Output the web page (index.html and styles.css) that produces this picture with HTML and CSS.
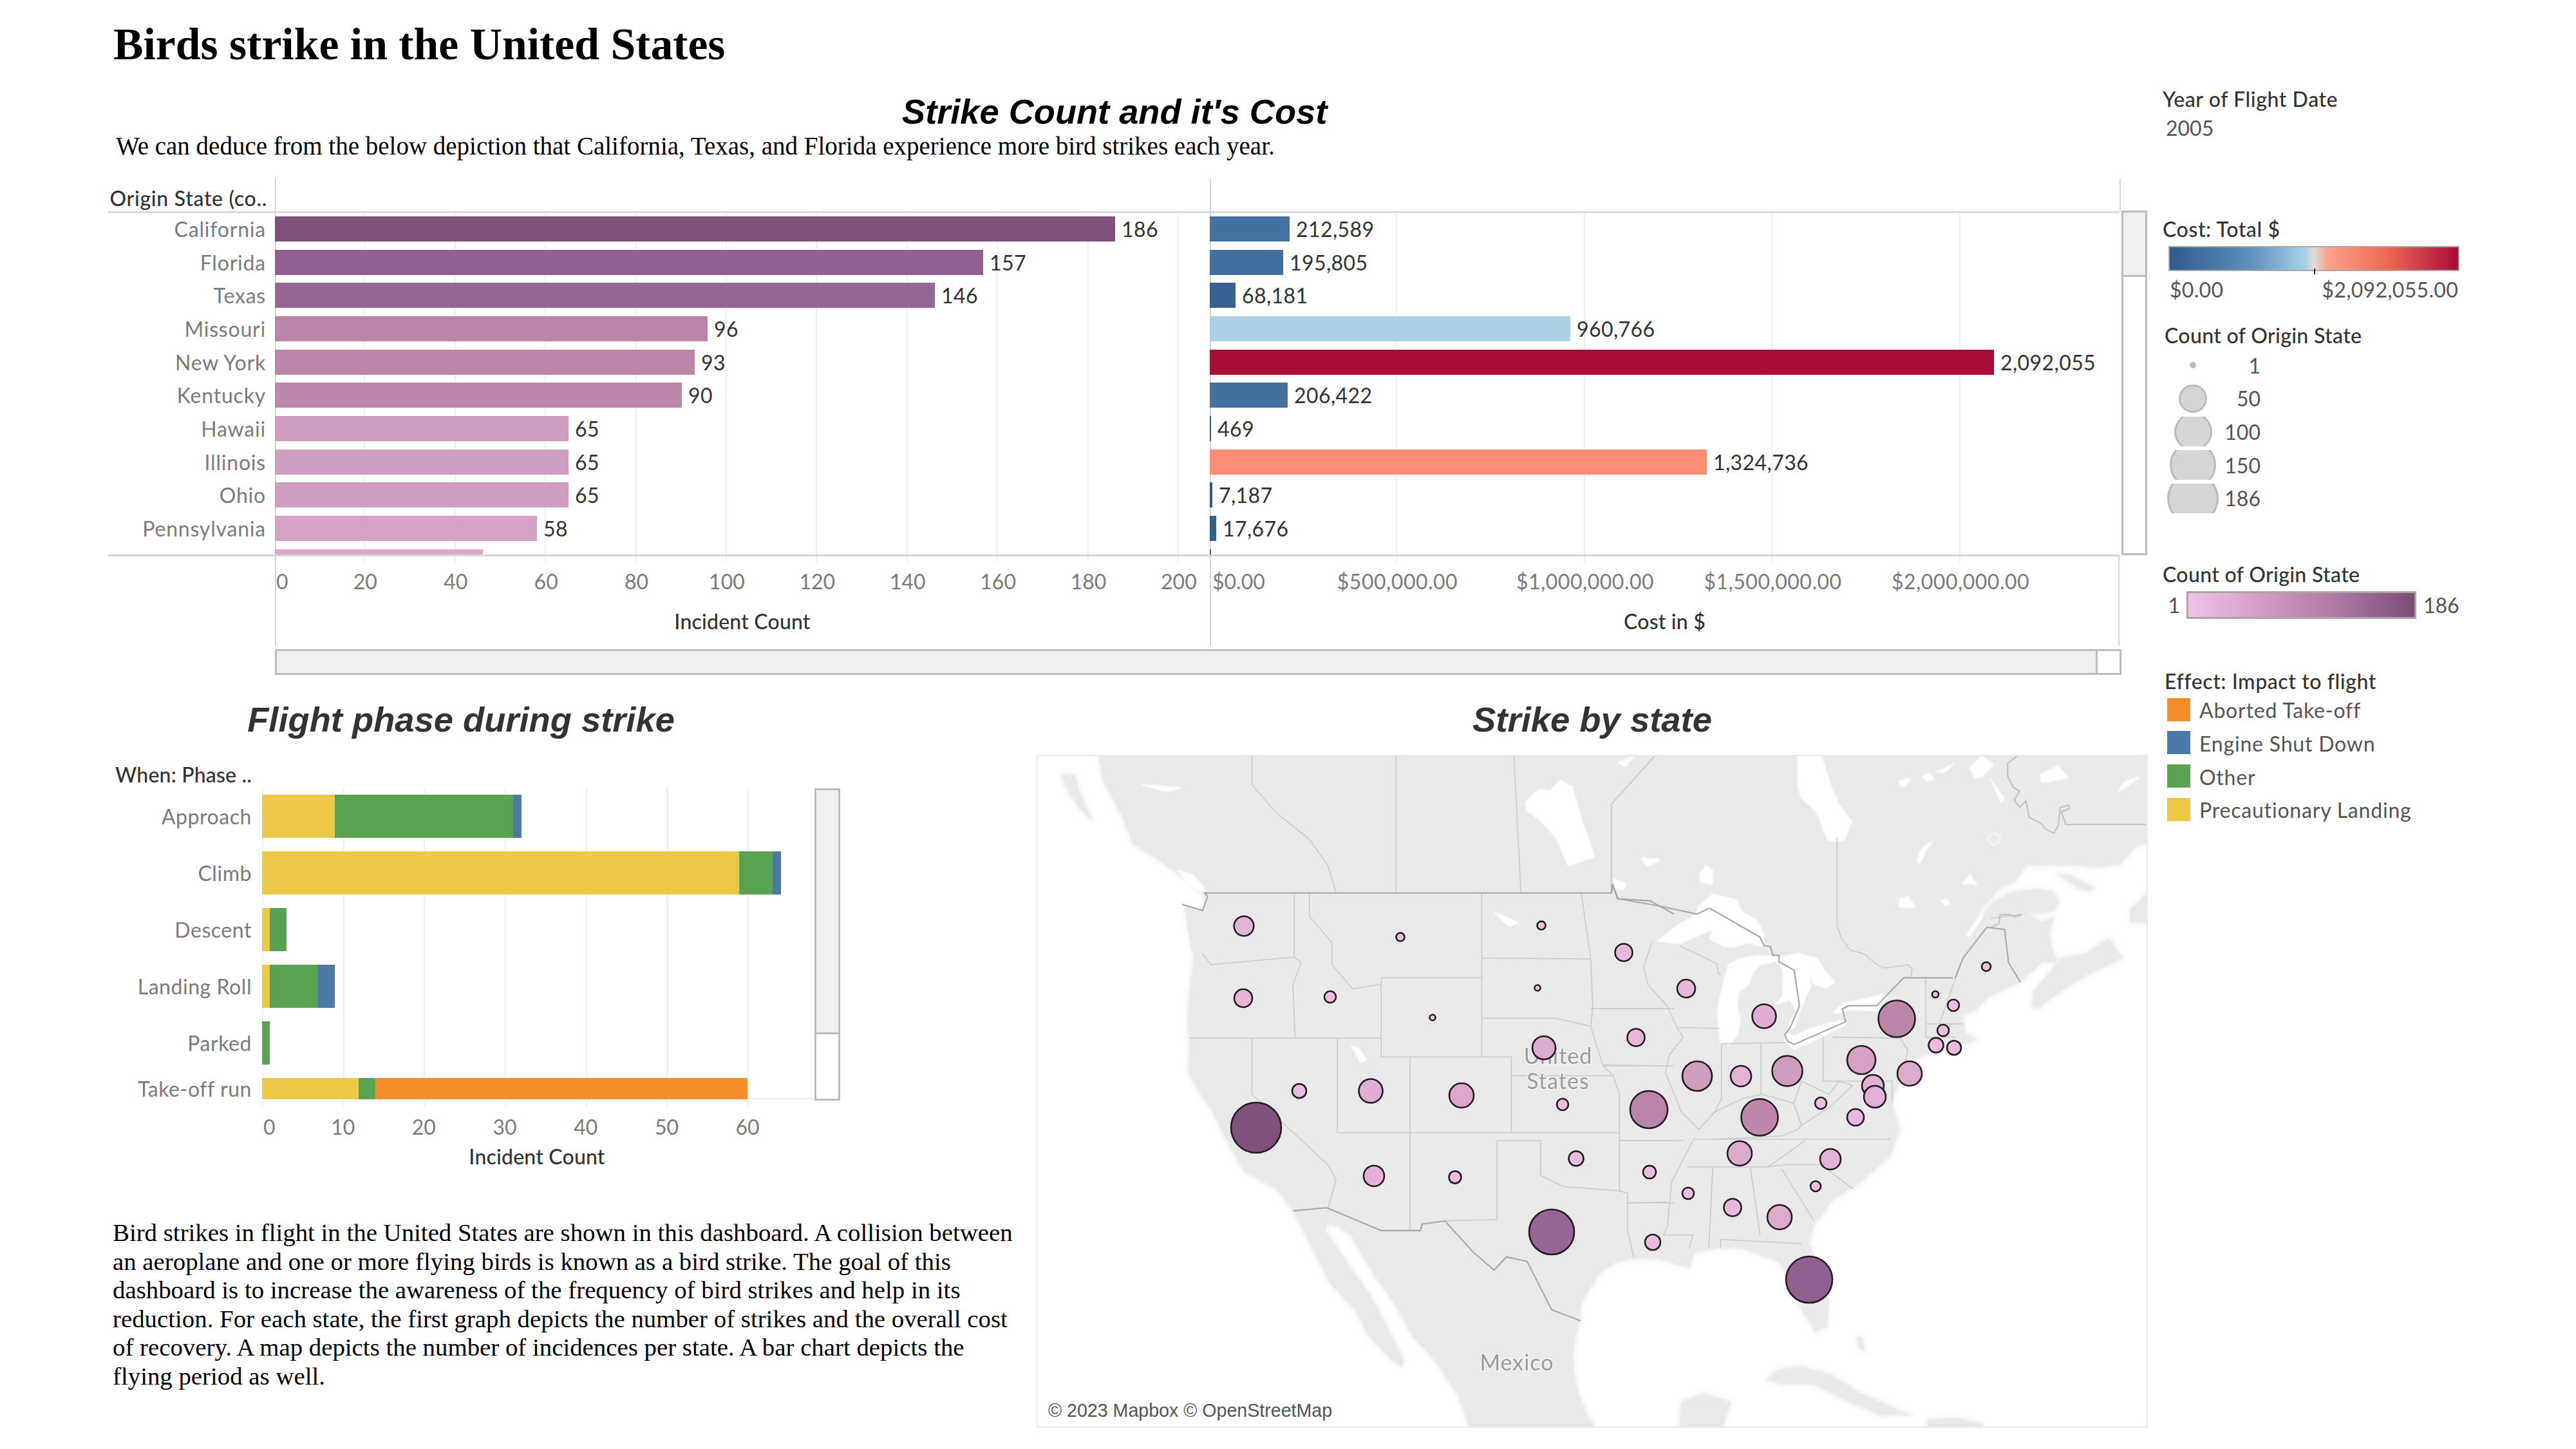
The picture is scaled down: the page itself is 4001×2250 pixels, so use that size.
FILE: index.html
```html
<!DOCTYPE html>
<html lang="en">
<head>
<meta charset="utf-8">
<title>Birds strike in the United States</title>
<link rel="stylesheet" href="styles.css">
</head>
<body>
<div class="dash">
  <main class="main">
    <h1 class="title">Birds strike in the United States</h1>
    <h2 class="head-top">Strike Count and it's Cost</h2>
    <p class="deduce">We can deduce from the below depiction that California, Texas, and Florida experience more bird strikes each year.</p>

    <section class="top">
      <div class="hdr">Origin State (co..</div>
      <div class="hdr-blank ruled"></div>
      <div class="hdr-blank ruled"></div>
      <div class="hdr-end"></div>

      <div class="plot labels">
        <div class="row">California</div>
        <div class="row">Florida</div>
        <div class="row">Texas</div>
        <div class="row">Missouri</div>
        <div class="row">New York</div>
        <div class="row">Kentucky</div>
        <div class="row">Hawaii</div>
        <div class="row">Illinois</div>
        <div class="row">Ohio</div>
        <div class="row">Pennsylvania</div>
        <div class="row">Colorado</div>
      </div>
      <div class="plot ruled grid1">
        <div class="row"><i class="bar" style="width:1305px;background:#7f5079"></i><span class="val">186</span></div>
        <div class="row"><i class="bar" style="width:1100px;background:#906090"></i><span class="val">157</span></div>
        <div class="row"><i class="bar" style="width:1025px;background:#966794"></i><span class="val">146</span></div>
        <div class="row"><i class="bar" style="width:672px;background:#ba84a7"></i><span class="val">96</span></div>
        <div class="row"><i class="bar" style="width:652px;background:#bb85a8"></i><span class="val">93</span></div>
        <div class="row"><i class="bar" style="width:632px;background:#bd88aa"></i><span class="val">90</span></div>
        <div class="row"><i class="bar" style="width:456px;background:#cf9dbe"></i><span class="val">65</span></div>
        <div class="row"><i class="bar" style="width:456px;background:#cf9dbe"></i><span class="val">65</span></div>
        <div class="row"><i class="bar" style="width:456px;background:#cf9dbe"></i><span class="val">65</span></div>
        <div class="row"><i class="bar" style="width:407px;background:#d5a2c3"></i><span class="val">58</span></div>
        <div class="row"><i class="bar" style="width:323px;background:#dba8c9"></i></div>
      </div>
      <div class="plot ruled grid2">
        <div class="row"><i class="bar" style="width:124px;background:#44729f"></i><span class="val">212,589</span></div>
        <div class="row"><i class="bar" style="width:114px;background:#42709e"></i><span class="val">195,805</span></div>
        <div class="row"><i class="bar" style="width:40px;background:#366191"></i><span class="val">68,181</span></div>
        <div class="row"><i class="bar" style="width:560px;background:#aed0e4"></i><span class="val">960,766</span></div>
        <div class="row"><i class="bar" style="width:1218px;background:#a90c38"></i><span class="val">2,092,055</span></div>
        <div class="row"><i class="bar" style="width:121px;background:#44729f"></i><span class="val">206,422</span></div>
        <div class="row"><i class="bar" style="width:2px;background:#2f5b8c"></i><span class="val">469</span></div>
        <div class="row"><i class="bar" style="width:772px;background:#fc8d76"></i><span class="val">1,324,736</span></div>
        <div class="row"><i class="bar" style="width:4px;background:#2f5b8c"></i><span class="val">7,187</span></div>
        <div class="row"><i class="bar" style="width:10px;background:#30608f"></i><span class="val">17,676</span></div>
        <div class="row"><i class="bar" style="width:2px;background:#2f5b8c"></i></div>
      </div>
      <div class="vscroll"><div class="thumb-top"></div></div>

      <div class="axis-blank"></div>
      <div class="axis ruled ext1">
        <div class="ticks">
          <span class="tick0">0</span><span class="tick1">20</span><span class="tick1">40</span><span class="tick1">60</span><span class="tick1">80</span><span class="tick1">100</span><span class="tick1">120</span><span class="tick1">140</span><span class="tick1">160</span><span class="tick1">180</span><span class="tick1">200</span>
        </div>
        <div class="axis-title">Incident Count</div>
      </div>
      <div class="axis ruled-both ext2">
        <div class="ticks">
          <span class="tick0b">$0.00</span><span class="tick2">$500,000.00</span><span class="tick2">$1,000,000.00</span><span class="tick2">$1,500,000.00</span><span class="tick2">$2,000,000.00</span>
        </div>
        <div class="axis-title">Cost in $</div>
      </div>
      <div class="axis-blank"></div>
    </section>
    <div class="hscroll"><div class="hthumb"></div></div>

    <section class="lower">
      <div class="lower-left">
        <h2 class="head-phase">Flight phase during strike</h2>
        <div class="phase">
          <div class="hdr-phase">When: Phase ..</div>
          <div></div>
          <div></div>
          <div class="phase-labels">
            <div class="prow">Approach</div>
            <div class="prow">Climb</div>
            <div class="prow">Descent</div>
            <div class="prow">Landing Roll</div>
            <div class="prow">Parked</div>
            <div class="prow">Take-off run</div>
          </div>
          <div class="phase-plot">
            <div class="prow"><i class="seg yellow" style="width:113px"></i><i class="seg green" style="width:277px"></i><i class="seg blue" style="width:13px"></i></div>
            <div class="prow"><i class="seg yellow" style="width:741px"></i><i class="seg green" style="width:52px"></i><i class="seg blue" style="width:13px"></i></div>
            <div class="prow"><i class="seg yellow" style="width:12px"></i><i class="seg green" style="width:26px"></i></div>
            <div class="prow"><i class="seg yellow" style="width:12px"></i><i class="seg green" style="width:75px"></i><i class="seg blue" style="width:26px"></i></div>
            <div class="prow"><i class="seg green" style="width:12px"></i></div>
            <div class="prow"><i class="seg yellow" style="width:150px"></i><i class="seg green" style="width:26px"></i><i class="seg orange" style="width:578px"></i></div>
          </div>
          <div class="vscroll phase-scroll"><div class="thumb-phase"></div></div>
          <div></div>
          <div class="phase-axis">
            <div class="ticks">
              <span class="ptick0">0</span><span class="ptick">10</span><span class="ptick">20</span><span class="ptick">30</span><span class="ptick">40</span><span class="ptick">50</span><span class="ptick">60</span>
            </div>
            <div class="axis-title phase-title">Incident Count</div>
          </div>
          <div></div>
        </div>
        <p class="story">Bird strikes in flight in the United States are shown in this dashboard. A collision between<br>an aeroplane and one or more flying birds is known as a bird strike. The goal of this<br>dashboard is to increase the awareness of the frequency of bird strikes and help in its<br>reduction. For each state, the first graph depicts the number of strikes and the overall cost<br>of recovery. A map depicts the number of incidences per state. A bar chart depicts the<br>flying period as well.</p>
      </div>

      <div class="lower-right">
        <h2 class="head-map">Strike by state</h2>
        <div class="map">
          <svg class="map-svg" viewBox="1610 1172 1726 1045" width="1726" height="1045" xmlns="http://www.w3.org/2000/svg">
            <defs>
              <g id="land">
                <g transform="translate(1600 1160) scale(0.6378 0.6826)">
                  <polygon points="165,18 180,80 225,160 250,220 310,255 355,285 420,335 428,365 400,370 375,358 385,420 398,480 388,560 383,620 388,680 385,740 415,790 445,830 472,885 520,965 600,1005 640,1055 680,1130 730,1220 790,1280 825,1340 880,1395 905,1410 910,1390 870,1320 830,1250 770,1170 720,1100 725,1085 750,1090 780,1110 830,1190 890,1270 930,1340 990,1400 1040,1470 1070,1548 1375,1548 1335,1480 1322,1400 1330,1320 1345,1260 1385,1200 1420,1175 1460,1165 1568,1165 1568,18"/>
                  <polygon points="78,62 110,65 120,100 150,165 120,140 85,90"/>
                </g>
                <g transform="translate(2400 1160) scale(0.6124 0.6826)">
                  <polygon points="0,18 1530,18 1530,218 1497,227 1458,267 1399,274 1323,267 1220,270 1192,306 1154,322 1110,365 1065,428 1066,432 1089,403 1132,355 1181,330 1252,322 1290,330 1303,350 1290,374 1225,379 1257,398 1290,388 1279,423 1285,457 1300,490 1260,490 1205,535 1130,565 1090,600 1060,610 1065,650 1095,665 1050,680 950,705 905,740 880,810 900,870 875,930 800,990 730,1030 680,1090 670,1130 700,1200 720,1260 715,1320 685,1330 650,1280 625,1210 590,1170 500,1140 440,1140 380,1150 365,1185 290,1165 215,1160 180,1170 110,1210 85,1250 90,1300 70,1360 75,1450 120,1548 0,1548"/>
                  <polygon points="1235,590 1238,555 1310,480 1370,470 1430,435 1465,480 1380,515 1300,560 1250,595"/>
                  <polygon points="1298,289 1334,292 1393,321 1377,328 1351,321"/>
                  <polygon points="1483,398 1483,369 1530,330 1530,398"/>
                  <polygon points="340,1548 345,1490 400,1470 470,1490 450,1548"/>
                  <polygon points="560,1440 590,1415 650,1410 720,1425 800,1470 900,1510 930,1520 850,1520 770,1490 680,1450 600,1450"/>
                  <polygon points="970,1530 1040,1525 1110,1540 1110,1548 970,1548"/>
                  <polygon points="790,1340 805,1345 810,1375 795,1365"/>
                </g>
              </g>
            </defs>
            <g class="land-halo"><use href="#land"/></g>
            <g class="land-fill"><use href="#land"/></g>

            <g class="water">
              <g transform="translate(1600 1160) scale(0.6378 0.6826)">
                <polygon points="360,280 395,290 425,320 420,330 380,310"/>
                <polygon points="1205,125 1240,95 1265,100 1290,75 1320,90 1345,170 1375,250 1310,270 1280,205 1240,165 1210,145"/>
                <polygon points="1430,35 1470,20 1450,45"/>
                <polygon points="1420,300 1450,310 1445,325 1425,320"/>
                <polygon points="782,680 800,685 820,712 805,718"/>
                <polygon points="1130,375 1190,400 1165,408"/>
                <polygon points="270,85 370,92 330,102"/>
                <polygon points="1490,250 1530,260 1500,270"/>
              </g>
              <g transform="translate(2400 1160) scale(0.6124 0.6826)">
                <polygon points="640,18 700,18 725,90 745,130 778,170 760,210 740,215 715,210 690,150 650,115 640,90"/>
                <polygon points="240,255 290,255 265,270"/>
              </g>
              <g transform="translate(2560 1340) scale(0.3333)">
                <polygon points="40,365 120,300 220,240 235,200 300,145 410,170 440,230 510,270 540,330 535,390 470,372 400,395 350,388 285,355 300,310 220,345 150,375 115,375"/>
                <polygon points="335,840 385,845 420,790 430,730 415,660 425,600 470,565 490,510 525,475 600,460 600,432 500,432 430,445 375,470 350,550 320,690 330,780"/>
                <polygon points="600,440 700,420 790,445 815,490 870,555 830,585 770,565 745,510 760,570 730,640 700,710 680,770 650,775 665,730 690,690 660,640 590,660 625,620 630,560 625,500"/>
                <polygon points="630,830 680,868 760,835 830,800 925,750 905,730 760,768 680,805 640,790"/>
                <polygon points="860,700 905,655 1040,625 1090,610 1120,625 1080,660 1070,690 930,685 910,700"/>
                <polygon points="240,50 270,10 300,30 300,100 240,90"/>
                <polygon points="1165,200 1210,160 1245,205 1190,210"/>
                <polygon points="1370,180 1400,185 1385,200"/>
                <polygon points="1480,340 1560,230 1560,250 1500,340"/>
              </g>
              <g transform="translate(2950 1172) scale(0.3333)">
                <polygon points="0,120 60,105 30,145 0,145"/>
                <polygon points="105,100 140,85 165,115 125,125"/>
                <polygon points="170,80 260,40 210,85"/>
                <polygon points="325,60 385,5 440,45 390,100 350,110"/>
                <polygon points="420,105 490,200 475,225 440,150"/>
                <polygon points="655,90 740,50 790,110 700,125 660,130"/>
                <polygon points="1015,175 1050,125 1125,100 1060,150"/>
                <polygon points="80,500 100,440 160,395 130,440 95,510"/>
                <polygon points="290,605 330,555 365,610 330,600"/>
                <polygon points="195,680 220,670 235,690 215,705"/>
                <polygon points="0,670 40,660 75,710 30,715 0,700"/>
                <circle cx="442" cy="392" r="26" class="ring"/>
              </g>
            </g>

            <g class="lines" transform="translate(1600 1160) scale(0.6378 0.6826)">
              <polyline points="540,18 540,85 600,150 680,210 725,270 745,330"/>
              <line x1="891" y1="18" x2="891" y2="330"/>
              <polyline points="1178,18 1195,330"/>
              <polyline points="1523,18 1415,130 1415,330"/>
              <line x1="643" y1="332" x2="643" y2="478"/>
              <polyline points="420,470 440,495 560,485 643,478 660,490 640,540 645,660"/>
              <line x1="388" y1="662" x2="855" y2="662"/>
              <polyline points="540,662 540,790 725,950 745,985 725,1050"/>
              <polyline points="680,332 680,385 735,445 735,495 785,550 855,540"/>
              <polyline points="855,525 1100,525"/>
              <polyline points="855,525 855,705 1172,705 1172,877"/>
              <line x1="1100" y1="332" x2="1100" y2="705"/>
              <line x1="1100" y1="480" x2="1365" y2="482"/>
              <polyline points="1100,617 1280,617 1365,635 1395,725 1420,748"/>
              <polyline points="1342,332 1365,480 1370,595 1365,635"/>
              <line x1="748" y1="662" x2="748" y2="877"/>
              <line x1="748" y1="877" x2="1435" y2="877"/>
              <line x1="925" y1="705" x2="925" y2="1100"/>
              <polyline points="1137,895 1137,1075 1010,1078"/>
              <polyline points="1137,895 1243,895 1243,975 1300,1000 1440,1010"/>
              <polyline points="1172,748 1420,748 1435,790 1435,1010 1455,1015 1455,1100 1470,1160"/>
              <line x1="1435" y1="895" x2="1568" y2="895"/>
              <line x1="1455" y1="1037" x2="1568" y2="1037"/>
              <line x1="1365" y1="595" x2="1568" y2="595"/>
              <line x1="1395" y1="725" x2="1568" y2="725"/>
            </g>
            <g class="lines" transform="translate(2400 1160) scale(0.6124 0.6826)">
              <line x1="120" y1="595" x2="310" y2="595"/>
              <polyline points="270,445 250,500 260,540 310,590 335,640 350,660 315,700 305,740 345,830 390,870"/>
              <line x1="335" y1="638" x2="440" y2="640"/>
              <line x1="145" y1="723" x2="305" y2="725"/>
              <polyline points="447,675 447,800 430,830 390,870"/>
              <line x1="547" y1="672" x2="547" y2="790"/>
              <line x1="447" y1="675" x2="615" y2="672"/>
              <line x1="705" y1="660" x2="705" y2="760"/>
              <line x1="730" y1="660" x2="900" y2="662"/>
              <line x1="705" y1="760" x2="880" y2="760"/>
              <polyline points="430,830 500,800 550,790 630,810 650,860 640,870 600,885 430,892"/>
              <polyline points="360,955 565,955 660,895"/>
              <line x1="375" y1="892" x2="875" y2="892"/>
              <polyline points="630,810 650,860 720,820 780,770 745,760 720,790 650,760 630,810"/>
              <polyline points="565,955 610,950 700,950 780,1005"/>
              <line x1="600" y1="960" x2="680" y2="1075"/>
              <line x1="520" y1="955" x2="545" y2="1110"/>
              <line x1="425" y1="955" x2="415" y2="1140"/>
              <polyline points="375,895 320,990 310,1090 300,1110 375,1110 365,1140"/>
              <line x1="190" y1="895" x2="350" y2="895"/>
              <line x1="208" y1="1037" x2="310" y2="1035"/>
              <polyline points="445,1140 445,1120 650,1130"/>
              <line x1="965" y1="525" x2="965" y2="660"/>
              <line x1="1000" y1="630" x2="1045" y2="515"/>
              <line x1="965" y1="630" x2="1060" y2="630"/>
              <line x1="965" y1="660" x2="1040" y2="660"/>
              <polyline points="900,662 920,690 900,760"/>
              <line x1="880" y1="760" x2="880" y2="810"/>
              <line x1="1025" y1="630" x2="1025" y2="660"/>
              <polyline points="168,130 280,18"/>
              <line x1="168" y1="130" x2="168" y2="330"/>
              <line x1="740" y1="205" x2="740" y2="405"/>
              <polyline points="1130,390 1210,380"/>
            </g>
            <g class="lines" transform="translate(2560 1340) scale(0.3333)">
              <polyline points="145,385 240,430 320,470 325,510 338,525"/>
              <polyline points="880,290 900,350 940,405 1010,425 1060,470 1100,490 1210,475 1230,495 1225,530"/>
            </g>
            <g class="lines fine" transform="translate(2950 1172) scale(0.3333)">
              <polyline points="550,5 505,40 505,100 530,150 560,170 535,210 560,245 590,215 605,290 660,320 680,345 720,365 740,330 750,245 790,235 795,250 755,265 775,325 1150,325"/>
              <polyline points="425,805 465,785 470,745 515,745 535,755 570,745"/>
            </g>
            <g class="border" transform="translate(1600 1160) scale(0.6378 0.6826)">
              <polyline points="370,358 420,372 432,340 425,332 1415,332 1420,315 1430,345 1510,350 1568,380"/>
              <polyline points="640,1055 722,1048 855,1100 950,1100 955,1085 1010,1078 1080,1150 1130,1190 1160,1160 1210,1170 1270,1280 1340,1305"/>
            </g>
            <g class="border" transform="translate(2400 1160) scale(0.6124 0.6826)">
              <polyline points="168,332 170,315 185,345 280,360 385,380 415,367"/>
              <polyline points="1040,525 1060,480 1120,410 1165,415 1175,490 1205,535"/>
            </g>
            <g class="border" transform="translate(2560 1340) scale(0.3333)">
              <polyline points="285,210 520,345 540,385 570,390 580,430 610,430 610,460 680,500 705,665 660,770 635,800 650,830 680,845 920,740 905,680 935,665 1065,665 1190,535 1420,535"/>
            </g>

            <text class="map-label" x="2420" y="1652" text-anchor="middle">United</text>
            <text class="map-label" x="2420" y="1691" text-anchor="middle">States</text>
            <text class="map-label" x="2356" y="2128" text-anchor="middle">Mexico</text>

            <g class="marks">
              <circle cx="2810" cy="1987" r="36" fill="#906090"/>
              <circle cx="2410" cy="1913" r="35" fill="#966794"/>
              <circle cx="1951" cy="1751" r="39" fill="#7f5079"/>
              <circle cx="2561" cy="1723" r="29" fill="#ba84a7"/>
              <circle cx="2733" cy="1735" r="28.5" fill="#bd88aa"/>
              <circle cx="2946" cy="1582" r="28.5" fill="#bb85a8"/>
              <circle cx="2636" cy="1671" r="23" fill="#cf9dbe"/>
              <circle cx="2776" cy="1663" r="23.5" fill="#cf9dbe"/>
              <circle cx="2891" cy="1646" r="22" fill="#d5a2c3"/>
              <circle cx="2398" cy="1627" r="18" fill="#dcaacb"/>
              <circle cx="2270" cy="1701" r="19" fill="#dba8c9"/>
              <circle cx="2129" cy="1694" r="18.5" fill="#dfaed0"/>
              <circle cx="2740" cy="1578" r="18.5" fill="#dfaed0"/>
              <circle cx="2702" cy="1791" r="19" fill="#dcaacb"/>
              <circle cx="2966" cy="1667" r="19" fill="#dcaacb"/>
              <circle cx="2764" cy="1890" r="19" fill="#dcaacb"/>
              <circle cx="2909" cy="1686" r="17" fill="#e1b0d3"/>
              <circle cx="2912" cy="1703" r="17" fill="#e1b0d3"/>
              <circle cx="1932" cy="1438" r="15.3" fill="#e3b3d6"/>
              <circle cx="1931" cy="1550" r="14" fill="#e6b5d8"/>
              <circle cx="2134" cy="1826" r="16" fill="#e3b3d6"/>
              <circle cx="2704" cy="1671" r="16" fill="#e3b3d6"/>
              <circle cx="2843" cy="1800" r="16" fill="#e3b3d6"/>
              <circle cx="2619" cy="1535" r="14" fill="#e8b8db"/>
              <circle cx="2522" cy="1479" r="13.5" fill="#e8b8db"/>
              <circle cx="2541" cy="1611" r="13.5" fill="#e8b8db"/>
              <circle cx="2691" cy="1875" r="13.5" fill="#e8b8db"/>
              <circle cx="2882" cy="1735" r="13" fill="#e8b8db"/>
              <circle cx="2567" cy="1929" r="12" fill="#eabbdd"/>
              <circle cx="3007" cy="1623" r="11.5" fill="#eabbdd"/>
              <circle cx="3035" cy="1627" r="11" fill="#eabbdd"/>
              <circle cx="2448" cy="1799" r="11.5" fill="#eabbdd"/>
              <circle cx="2018" cy="1694" r="11" fill="#eabbdd"/>
              <circle cx="2562" cy="1820" r="10" fill="#ecbede"/>
              <circle cx="2260" cy="1828" r="9.5" fill="#ecbede"/>
              <circle cx="2066" cy="1548" r="9" fill="#ecbede"/>
              <circle cx="2427" cy="1715" r="9" fill="#ecbede"/>
              <circle cx="2828" cy="1713" r="9" fill="#ecbede"/>
              <circle cx="3018" cy="1600" r="9" fill="#ecbede"/>
              <circle cx="3034" cy="1561" r="9" fill="#ecbede"/>
              <circle cx="2622" cy="1853" r="9" fill="#ecbede"/>
              <circle cx="2820" cy="1842" r="8" fill="#edc0e0"/>
              <circle cx="3085" cy="1501" r="7" fill="#edc0e0"/>
              <circle cx="2175" cy="1455" r="6.5" fill="#edc0e0"/>
              <circle cx="2394" cy="1437" r="6.5" fill="#edc0e0"/>
              <circle cx="3006" cy="1544" r="5" fill="#efc4e3"/>
              <circle cx="2225" cy="1580" r="4.5" fill="#efc4e3"/>
              <circle cx="2388" cy="1534" r="4.5" fill="#efc4e3"/>
            </g>
          </svg>
          <div class="credit">© 2023 Mapbox © OpenStreetMap</div>
        </div>
      </div>
    </section>
  </main>

  <aside class="side">
    <div class="lg-title">Year of Flight Date</div>
    <div class="lg-year">2005</div>

    <div class="lg-title cost-title">Cost: Total $</div>
    <div class="ramp-cost"><i class="ramp-tick"></i></div>
    <div class="ramp-ends"><span>$0.00</span><span>$2,092,055.00</span></div>

    <div class="lg-title count-title">Count of Origin State</div>
    <div class="sizes">
      <div class="size-row"><div class="size-cell"><i class="dot s1"></i></div><span class="size-num">1</span></div>
      <div class="size-row"><div class="size-cell"><i class="dot s50"></i></div><span class="size-num">50</span></div>
      <div class="size-row"><div class="size-cell"><i class="dot s100"></i></div><span class="size-num">100</span></div>
      <div class="size-row"><div class="size-cell"><i class="dot s150"></i></div><span class="size-num">150</span></div>
      <div class="size-row"><div class="size-cell"><i class="dot s186"></i></div><span class="size-num">186</span></div>
    </div>

    <div class="lg-title count2-title">Count of Origin State</div>
    <div class="purple-row"><span class="purple-min">1</span><div class="ramp-purple"></div><span class="purple-max">186</span></div>

    <div class="lg-title effect-title">Effect: Impact to flight</div>
    <div class="swatches">
      <div class="sw-row"><i class="sw orange"></i><span>Aborted Take-off</span></div>
      <div class="sw-row"><i class="sw blue"></i><span>Engine Shut Down</span></div>
      <div class="sw-row"><i class="sw green"></i><span>Other</span></div>
      <div class="sw-row"><i class="sw yellow"></i><span>Precautionary Landing</span></div>
    </div>
  </aside>
</div>
</body>
</html>
```
FILE: styles.css
```css
* { box-sizing: border-box; }
html, body { margin: 0; padding: 0; background: #fff; }
body { width: 4001px; height: 2250px; overflow: hidden; font-family: "Lato", "Open Sans", sans-serif; font-size: 32px; color: #7b7b7b; }
i { display: block; }

.dash { display: grid; grid-template-columns: 3340px 661px; height: 2250px; }
.main { display: flex; flex-direction: column; }

.title { margin: 0; height: 138px; padding-left: 176px; font: bold 69.7px/138px "Liberation Serif", serif; color: #000; white-space: nowrap; }
.head-top { margin: 0; height: 70px; padding-left: 1401px; font: italic bold 54.2px/70px "Liberation Sans", sans-serif; color: #000; white-space: nowrap; }
.deduce { margin: 0; height: 38px; padding-left: 180px; font: 39px/38px "Liberation Serif", serif; color: #000; white-space: nowrap; }

.top { display: grid; margin: 31px 0 0 168px; grid-template-columns: 259px 1452px 1413px 43px; grid-template-rows: 51px 536px 139px; }
.hdr { padding-right: 12px; font-weight: 500; letter-spacing: .7px; line-height: 62px; color: #333; text-align: right; white-space: nowrap; }
.hdr-end { box-shadow: inset 2px 0 0 #d4d4d4; }
.ruled { box-shadow: inset 2px 0 0 #d4d4d4; }
.ruled-both { box-shadow: inset 2px 0 0 #d4d4d4, inset -2px 0 0 #d4d4d4; }

.plot { height: 536px; padding-top: 5px; overflow: hidden; border-top: 3px solid #dcdcdc; border-bottom: 3px solid #d6d6d6; }
.labels { padding-right: 14px; text-align: right; letter-spacing: .8px; }
.row { display: flex; align-items: center; height: 39px; margin-bottom: 12.67px; white-space: nowrap; }
.labels .row { justify-content: flex-end; }
.grid1 { background-image: repeating-linear-gradient(90deg, transparent 0 138.4px, #f0f0f0 138.4px 140.4px); }
.grid2 { background-image: repeating-linear-gradient(90deg, transparent 0 289.5px, #f0f0f0 289.5px 291.5px); }
.bar { height: 39px; flex: none; }
.val { margin-left: 10px; color: #333; letter-spacing: .4px; }

.vscroll { width: 40px; margin: -1px 0 0 3px; height: 535px; border: 3px solid #bdbdbd; background: #fff; }
.thumb-top { height: 100px; background: #efefef; border-bottom: 3px solid #bdbdbd; }

.axis { display: flex; flex-direction: column; }
.ext1 { background: repeating-linear-gradient(90deg, transparent 0 138.4px, #f0f0f0 138.4px 140.4px) 0 0 / 100% 9px no-repeat; }
.ext2 { background: repeating-linear-gradient(90deg, transparent 0 289.5px, #f0f0f0 289.5px 291.5px) 0 0 / 100% 9px no-repeat; }
.ticks { display: flex; margin-top: 19px; height: 40px; line-height: 40px; white-space: nowrap; }
.tick0 { width: 70.2px; padding-left: 2px; flex: none; }
.tick1 { width: 140.4px; text-align: center; flex: none; }
.tick0b { width: 145.75px; padding-left: 4px; flex: none; }
.tick2 { width: 291.5px; text-align: center; flex: none; letter-spacing: .5px; }
.axis-title { margin-top: 22px; line-height: 40px; font-weight: 500; letter-spacing: .2px; color: #333; text-align: center; }

.hscroll { margin: 5px 0 0 427px; width: 2868px; height: 40px; border: 3px solid #bdbdbd; background: #fff; }
.hthumb { width: 2828px; height: 34px; background: #efefef; border-right: 3px solid #bdbdbd; }

.lower { display: grid; grid-template-columns: 1610px 1726px; }
.lower-left { display: flex; flex-direction: column; }
.head-phase { margin: 37px 0 0; width: 1432px; height: 65px; text-align: center; font: italic bold 54.3px/65px "Liberation Sans", sans-serif; color: #333; white-space: nowrap; }

.phase { display: grid; margin-top: 33px; grid-template-columns: 407px 858px 40px; grid-template-rows: 41px 484px auto; }
.hdr-phase { padding-right: 16px; line-height: 40px; font-weight: 500; letter-spacing: .2px; color: #333; text-align: right; white-space: nowrap; }
.phase-labels { padding-top: 10px; padding-right: 16px; letter-spacing: .55px; }
.phase-plot { padding-top: 10px; height: 483px; background: repeating-linear-gradient(90deg, #f0f0f0 0 2px, transparent 2px 125.7px); border-bottom: 2px solid #f0f0f0; }
.prow { display: flex; align-items: center; height: 67px; margin-bottom: 21px; white-space: nowrap; }
.prow:last-child { height: 33px; margin-bottom: 0; }
.phase-labels .prow { justify-content: flex-end; }
.seg { height: 100%; flex: none; }
.yellow { background: #ebc946; }
.green { background: #59a251; }
.blue { background: #4e79a7; }
.orange { background: #f48e2b; }

.phase-scroll { margin: 0; width: 40px; height: 485px; }
.thumb-phase { height: 379px; background: #efefef; border-bottom: 3px solid #bdbdbd; }

.phase-axis { background: repeating-linear-gradient(90deg, #f0f0f0 0 2px, transparent 2px 125.7px) 0 0 / 100% 11px no-repeat; }
.phase-axis .ticks { margin-top: 22px; }
.ptick0 { width: 62.85px; padding-left: 2px; flex: none; }
.ptick { width: 125.7px; text-align: center; flex: none; }
.phase-title { margin-top: 6px; padding-right: 4px; }

.story { margin: 76px 0 0 175px; font: 38.85px/44.5px "Liberation Serif", serif; color: #000; white-space: nowrap; }

.lower-right { display: flex; flex-direction: column; }
.head-map { margin: 37px 0 0; height: 65px; text-align: center; font: italic bold 54.4px/65px "Liberation Sans", sans-serif; color: #333; }
.map { position: relative; margin-top: 22px; width: 1726px; height: 1045px; overflow: hidden; }
.map::after { content: ""; position: absolute; inset: 0; border: 2px solid #ebebeb; pointer-events: none; }
.map-svg { display: block; }
.land-halo { fill: #f4f4f4; stroke: #f4f4f4; stroke-width: 9; stroke-linejoin: round; filter: blur(3px); }
.land-fill { fill: #e9e9e9; filter: blur(1px); }
.water { filter: blur(1.2px); }
.water polygon { fill: #fff; stroke: #fff; stroke-width: 2; stroke-linejoin: round; }
.water .ring { fill: none; stroke: #f6f6f6; stroke-width: 9; }
.lines polyline, .lines line { fill: none; stroke: #c8c8c8; stroke-width: 1.5; vector-effect: non-scaling-stroke; }
.fine polyline { stroke: #b0b0b0; }
.border polyline { fill: none; stroke: #a8a8a8; stroke-width: 2.2; vector-effect: non-scaling-stroke; }
.map-label { font: 34px "Lato", sans-serif; fill: #9a9a9a; stroke: #f4f4f4; stroke-width: 3; paint-order: stroke; letter-spacing: 1px; }
.marks circle { stroke: #231a22; stroke-width: 2.6; }
.credit { position: absolute; left: 8px; bottom: 8px; height: 37px; padding: 0 10px; font: 28.6px/37px "Liberation Sans", sans-serif; color: #555; background: rgba(255,255,255,.55); white-space: nowrap; }

.side { display: flex; flex-direction: column; padding: 134px 0 0 19px; }
.lg-title { height: 40px; line-height: 40px; font-weight: 500; letter-spacing: .6px; color: #333; white-space: nowrap; }
.lg-year { margin: 5px 0 0 5px; height: 40px; line-height: 40px; color: #555; }
.cost-title { margin-top: 117px; }
.ramp-cost { position: relative; margin: 6px 0 0 9px; width: 452px; height: 39px; border: 2px solid #aba8a6; background: linear-gradient(90deg, #2f5b8c 0%, #5f8fb9 28%, #a9cfe5 47%, #e0dcda 50%, #fda08a 55%, #ef6a55 75%, #a90c38 100%); }
.ramp-tick { position: absolute; left: 224px; top: 33px; width: 2px; height: 9px; background: #000; }
.ramp-ends { display: flex; justify-content: space-between; margin: 9px 0 0 11px; width: 448px; height: 40px; line-height: 40px; color: #555; letter-spacing: .3px; }
.count-title { margin: 31px 0 0 3px; letter-spacing: .35px; }
.sizes { display: flex; flex-direction: column; gap: 5.7px; margin-top: 3px; }
.size-row { display: flex; align-items: center; height: 46px; }
.size-cell { display: flex; align-items: center; justify-content: center; width: 94px; height: 46px; overflow: hidden; flex: none; }
.dot { flex: none; border-radius: 50%; background: #d5d5d5; border: 3px solid #bbb; }
.s1 { width: 10px; height: 10px; background: #bbb; }
.s50 { width: 44px; height: 44px; }
.s100 { width: 59px; height: 59px; }
.s150 { width: 72px; height: 72px; }
.s186 { width: 80px; height: 80px; }
.size-num { width: 58px; text-align: right; color: #555; }
.count2-title { margin-top: 75px; letter-spacing: .35px; }
.purple-row { display: flex; align-items: center; margin-top: 6px; height: 43px; color: #555; }
.purple-min { width: 27px; text-align: right; flex: none; }
.ramp-purple { width: 357px; height: 43px; margin: 0 11px 0 10px; border: 3px solid #aba3a8; background: linear-gradient(90deg, #efc4e6 0%, #d49fc4 30%, #b680a6 60%, #906090 85%, #7b4c75 100%); flex: none; }
.effect-title { margin: 77px 0 0 3px; }
.swatches { display: flex; flex-direction: column; gap: 15.7px; margin: 6px 0 0 7px; }
.sw-row { display: flex; align-items: center; height: 36px; gap: 14px; color: #555; white-space: nowrap; letter-spacing: .8px; }
.sw-row span { padding-top: 2px; }
.sw { width: 36px; height: 36px; flex: none; }
```
